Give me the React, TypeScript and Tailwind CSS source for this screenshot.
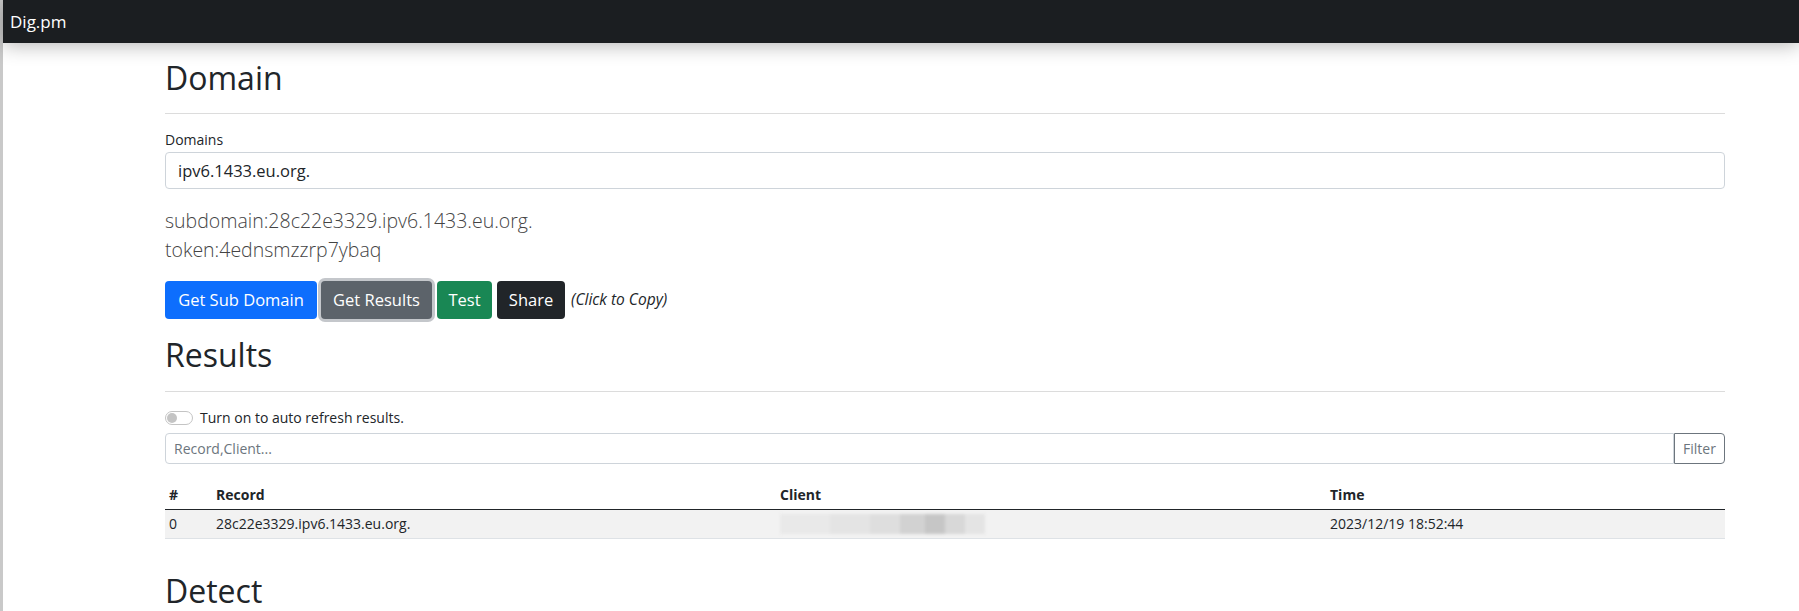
import { useState } from "react"

const btn = "h-[38px] rounded-[4px] text-[16.5px] text-white flex items-center justify-center shrink-0"

function Toggle({ on, onChange }: { on: boolean; onChange: () => void }) {
  return (
    <button
      onClick={onChange}
      className="w-[28px] h-[14px] rounded-full border border-[#c4c4c4] bg-white flex items-center px-[1px]"
    >
      <span className={"w-[10px] h-[10px] rounded-full bg-[#c4c4c4] " + (on ? "ml-auto" : "")} />
    </button>
  )
}

export default function App() {
  const [domain, setDomain] = useState("ipv6.1433.eu.org.")
  const [auto, setAuto] = useState(false)

  return (
    <div className="flex min-h-screen bg-white text-[#212529] font-['Open_Sans',sans-serif]">
      <div className="w-[3px] shrink-0 bg-[#c9c9c9]" />

      <div className="flex-1 flex flex-col">
        <nav className="relative z-10 h-[43px] bg-[#1b1e21] flex items-center pl-[7px] shadow-[0_2px_20px_rgba(0,0,0,0.3)]">
          <span className="text-[17px] text-white leading-none">Dig.pm</span>
        </nav>

        <main className="ml-[162px] w-[1560px] flex flex-col">
          <h2 className="mt-[16px] text-[32px] leading-[38px] font-normal">Domain</h2>
          <hr className="mt-[16px] border-t border-[#dcdcdc]" />

          <label className="mt-[16px] text-[14px] leading-[20px]">Domains</label>
          <input
            value={domain}
            onChange={(e) => setDomain(e.target.value)}
            className="mt-[2px] h-[37px] border border-[#ced4da] rounded-[4px] px-[12px] text-[16.5px] outline-none"
          />

          <div className="mt-[17px] text-[19.5px] leading-[29px] font-light text-[#444]">
            <div>subdomain:28c22e3329.ipv6.1433.eu.org.</div>
            <div>token:4ednsmzzrp7ybaq</div>
          </div>

          {/* action buttons */}
          <div className="mt-[17px] flex items-center">
            <button className={btn + " w-[152px] bg-[#0d6efd]"}>Get Sub Domain</button>
            <button className={btn + " ml-[4px] w-[111px] bg-[#5c636a] shadow-[0_0_0_3px_#c4c7cb]"}>Get Results</button>
            <button className={btn + " ml-[5px] w-[55px] bg-[#198754]"}>Test</button>
            <button className={btn + " ml-[5px] w-[68px] bg-[#212529]"}>Share</button>
            <span className="ml-[6px] text-[15.5px] italic">(Click to Copy)</span>
          </div>

          <h2 className="mt-[17px] text-[32px] leading-[38px] font-normal">Results</h2>
          <hr className="mt-[17px] border-t border-[#dcdcdc]" />

          <div className="mt-[16px] flex items-center gap-[7px] text-[14px] leading-[20px]">
            <Toggle on={auto} onChange={() => setAuto(!auto)} />
            <span>Turn on to auto refresh results.</span>
          </div>

          <div className="mt-[5px] flex h-[31px]">
            <input
              placeholder="Record,Client..."
              className="flex-1 border border-[#ced4da] rounded-l-[4px] px-[8px] text-[14px] outline-none placeholder:text-[#6c757d]"
            />
            <button className="w-[51px] border border-[#6c757d] rounded-r-[4px] text-[14px] text-[#6c757d]">Filter</button>
          </div>

          <table className="mt-[17px] w-full text-[14px] leading-[20px] border-collapse">
            <thead>
              <tr className="border-b border-[#212529] text-left">
                <th className="w-[47px] px-[4px] py-[4px] font-bold">#</th>
                <th className="w-[564px] px-[4px] py-[4px] font-bold">Record</th>
                <th className="w-[550px] px-[4px] py-[4px] font-bold">Client</th>
                <th className="px-[4px] py-[4px] font-bold">Time</th>
              </tr>
            </thead>
            <tbody>
              <tr className="bg-[#f2f2f2] border-b border-[#dee2e6]">
                <td className="px-[4px] py-[4px]">0</td>
                <td className="px-[4px] py-[4px]">28c22e3329.ipv6.1433.eu.org.</td>
                <td className="px-[4px] py-[4px]">
                  <div className="flex h-[20px] w-[205px] blur-[1.5px]">
                    <div className="w-[50px] bg-[#e9e9e9]" />
                    <div className="w-[40px] bg-[#e4e4e4]" />
                    <div className="w-[30px] bg-[#dedede]" />
                    <div className="w-[25px] bg-[#d2d2d2]" />
                    <div className="w-[20px] bg-[#c6c6c6]" />
                    <div className="w-[20px] bg-[#d8d8d8]" />
                    <div className="w-[20px] bg-[#e4e4e4]" />
                  </div>
                </td>
                <td className="px-[4px] py-[4px]">2023/12/19 18:52:44</td>
              </tr>
            </tbody>
          </table>

          <h2 className="mt-[33px] text-[32px] leading-[38px] font-normal">Detect</h2>
        </main>
      </div>
    </div>
  )
}
